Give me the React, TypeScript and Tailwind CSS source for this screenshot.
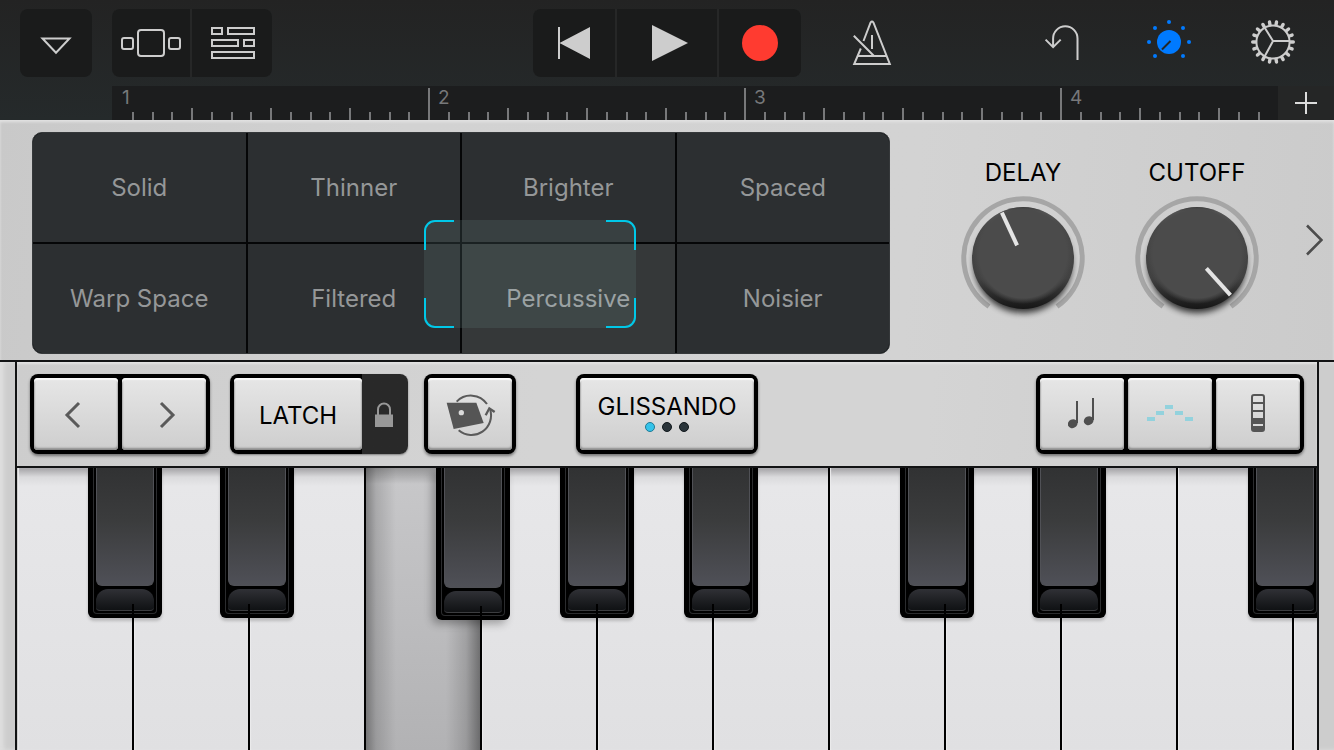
import { ChangeEvent, ReactNode, useState } from 'react';

const presets = [
  'Solid',
  'Thinner',
  'Brighter',
  'Spaced',
  'Warp Space',
  'Filtered',
  'Percussive',
  'Noisier',
];

type Shift = 'left' | 'center' | 'right';

interface PianoKey {
  note: string;
  sharp?: Shift;
}

const keys: PianoKey[] = [
  { note: 'C3', sharp: 'left' },
  { note: 'D3', sharp: 'right' },
  { note: 'E3' },
  { note: 'F3', sharp: 'left' },
  { note: 'G3', sharp: 'center' },
  { note: 'A3', sharp: 'right' },
  { note: 'B3' },
  { note: 'C4', sharp: 'left' },
  { note: 'D4', sharp: 'right' },
  { note: 'E4' },
  { note: 'F4', sharp: 'left' },
  { note: 'G4' },
];

const sharpPosition: Record<Shift, string> = {
  left: '-right-7',
  center: '-right-9',
  right: '-right-11',
};

const seamPosition: Record<Shift, string> = {
  left: 'left-11',
  center: 'left-9',
  right: 'left-7',
};

function Toolbar() {
  return (
    <header className="grid grid-cols-[1fr_auto_1fr] items-center px-5 h-[86px] text-[#cdcdcd]">
      <div className="flex gap-5">
        <button
          aria-label="Menu"
          className="flex items-center justify-center w-[72px] h-[68px] rounded-lg bg-[#1a1b1b]"
        >
          <svg width="32" height="18" viewBox="0 0 32 18" className="mt-1.5">
            <path d="M2.5 1.5h27L16 15.8z" fill="none" stroke="currentColor" strokeWidth="2" />
          </svg>
        </button>
        <div className="flex gap-[2px] rounded-lg overflow-hidden bg-[#262727]">
          <button
            aria-label="Instruments"
            className="flex items-center justify-center w-[78px] h-[68px] bg-[#1a1b1b]"
          >
            <svg
              width="60"
              height="28"
              viewBox="0 0 60 28"
              fill="none"
              stroke="currentColor"
              strokeWidth="2"
            >
              <rect x="1" y="9" width="11" height="11" rx="2" />
              <rect x="17" y="1" width="26" height="26" rx="3" />
              <rect x="48" y="9" width="11" height="11" rx="2" />
            </svg>
          </button>
          <button
            aria-label="Tracks"
            className="flex items-center justify-center w-20 h-[68px] pl-[2px] bg-[#1a1b1b]"
          >
            <svg
              width="44"
              height="32"
              viewBox="0 0 44 32"
              fill="none"
              stroke="currentColor"
              strokeWidth="2"
            >
              <rect x="1" y="1" width="10" height="6" />
              <rect x="17" y="1" width="26" height="6" />
              <rect x="1" y="13" width="26" height="6" />
              <rect x="33" y="13" width="10" height="6" />
              <rect x="1" y="25" width="42" height="6" />
            </svg>
          </button>
        </div>
      </div>

      <div className="flex gap-[2px] rounded-lg overflow-hidden bg-[#262727]">
        <button
          aria-label="Rewind"
          className="flex items-center justify-center w-[82px] h-[68px] bg-[#1a1b1b]"
        >
          <svg width="32" height="32" viewBox="0 0 32 32" fill="currentColor">
            <path d="M0 0h2v32H0zM1.5 16 32 0v32z" />
          </svg>
        </button>
        <button
          aria-label="Play"
          className="flex items-center justify-center w-[100px] h-[68px] bg-[#1a1b1b]"
        >
          <svg width="36" height="36" viewBox="0 0 36 36" fill="currentColor" className="ml-1.5">
            <path d="M0 0l36 18L0 36z" />
          </svg>
        </button>
        <button
          aria-label="Record"
          className="flex items-center justify-center w-[82px] h-[68px] bg-[#1a1b1b]"
        >
          <span className="w-9 h-9 rounded-full bg-[#ff3b30]" />
        </button>
      </div>

      <div className="flex justify-between pl-[35px]">
        <button aria-label="Metronome" className="flex items-center justify-center w-[72px] h-[68px]">
          <svg
            width="40"
            height="46"
            viewBox="852 20 40 46"
            fill="none"
            stroke="currentColor"
            strokeWidth="2"
          >
            <path d="M863.5 41 870.6 22.5Q872 20.5 873.4 22.5L889.8 64H854.2L860.8 48.5" />
            <path d="M858 56h28M872 35v14M853.8 35.8 874 56" />
          </svg>
        </button>
        <div className="flex gap-[26px]">
          <button aria-label="Undo" className="flex items-center justify-center w-20 h-[68px]">
            <svg
              width="36"
              height="38"
              viewBox="1044 25 36 38"
              fill="none"
              stroke="currentColor"
              strokeWidth="2"
            >
              <path d="M1077.5 61V39.5a12.2 12.2 0 0 0-24.4 0V48M1045.6 40.6l7.5 7.6 7.6-7.6" />
            </svg>
          </button>
          <button
            aria-label="Controls"
            className="flex items-center justify-center w-20 h-[68px] text-[#007aff]"
          >
            <svg width="46" height="46" viewBox="-24 -22 46 46" fill="currentColor">
              <circle r="12" />
              <circle cx="0" cy="-20" r="2" />
              <circle cx="-14" cy="-14" r="2" />
              <circle cx="14" cy="-14" r="2" />
              <circle cx="-20" cy="0" r="2" />
              <circle cx="20" cy="0" r="2" />
              <circle cx="-14" cy="14" r="2" />
              <circle cx="14" cy="14" r="2" />
              <path d="M1.5-1-7 7.5" stroke="#222728" strokeWidth="2" />
            </svg>
          </button>
          <button aria-label="Settings" className="flex items-center justify-center w-20 h-[68px]">
            <svg
              width="46"
              height="46"
              viewBox="-22 -22 46 46"
              fill="none"
              stroke="currentColor"
              strokeWidth="2"
            >
              <circle r="16.6" />
              <path d="M0-1H17M0-1-8.4 14.5M0-1-8.4-14.5" />
              {Array.from({ length: 18 }, (_, i) => (
                <path
                  key={i}
                  d="M17.5 0H20.3"
                  strokeWidth="3.4"
                  strokeLinecap="round"
                  transform={`rotate(${i * 20})`}
                />
              ))}
            </svg>
          </button>
        </div>
      </div>
    </header>
  );
}

function tickHeight(bar: number, tick: number) {
  if (tick === 0) return bar === 1 ? 'h-0' : 'h-8';
  return tick % 4 === 0 ? 'h-3' : 'h-2';
}

function Ruler() {
  return (
    <div className="flex h-[34px] pl-28 text-[#77787a]">
      <div className="flex flex-1 min-w-0 pr-1 bg-[#1c1d1e]">
        <div className="flex flex-1 min-w-0 overflow-hidden">
          {[1, 2, 3, 4].map((bar) => (
            <div key={bar} className="relative flex items-end shrink-0 w-[316px]">
              <span className="absolute left-[10px] top-0 text-[19px] leading-6">{bar}</span>
              {Array.from({ length: 16 }, (_, tick) => (
                <span key={tick} className="flex-1">
                  <span className={`block w-[2px] bg-[#77787a] ${tickHeight(bar, tick)}`} />
                </span>
              ))}
            </div>
          ))}
        </div>
      </div>
      <button
        aria-label="Add section"
        className="flex items-center justify-center shrink-0 w-14 bg-[#252626] text-[#dcdcdc]"
      >
        <svg width="22" height="22" viewBox="0 0 22 22" stroke="currentColor" strokeWidth="2">
          <path d="M0 11h22M11 0v22" />
        </svg>
      </button>
    </div>
  );
}

function TransformPad() {
  const [selected, setSelected] = useState('Percussive');

  return (
    <div className="relative flex-1 grid grid-cols-4 grid-rows-2 gap-[2px] h-[222px] rounded-[10px] overflow-hidden border border-[#35383a] bg-[#050607]">
      {presets.map((preset) => (
        <button
          key={preset}
          onClick={() => setSelected(preset)}
          className={`pt-px text-2xl ${
            preset === selected ? 'bg-[#353839] text-[#b0b2b3]' : 'bg-[#2c2f31] text-[#959798]'
          }`}
        >
          {preset}
        </button>
      ))}
      <div className="absolute left-[391px] top-[87px] w-[212px] h-[108px] rounded-[10px] pointer-events-none bg-[#5c7474]/25">
        <svg
          viewBox="0 0 212 108"
          className="w-full h-full"
          fill="none"
          stroke="#00c8e8"
          strokeWidth="2"
        >
          <path d="M1 30V11A10 10 0 0 1 11 1H30M182 1H201A10 10 0 0 1 211 11V30M211 78V97A10 10 0 0 1 201 107H182M30 107H11A10 10 0 0 1 1 97V78" />
        </svg>
      </div>
    </div>
  );
}

interface KnobProps {
  label: string;
  initial: number;
}

// value is the pointer angle in degrees, 0 is straight up
function Knob({ label, initial }: KnobProps) {
  const [angle, setAngle] = useState(initial);
  const id = `knob-${label.toLowerCase()}`;

  function handleChange(e: ChangeEvent<HTMLInputElement>) {
    setAngle(Number(e.target.value));
  }

  return (
    <div className="flex flex-col items-center w-[124px]">
      <label htmlFor={id} className="text-2xl leading-8 text-black">
        {label}
      </label>
      <div className="relative mt-[7px]">
        <svg width="124" height="124" viewBox="-62 -62 124 124" className="block">
          <defs>
            <linearGradient id={`${id}-rim`} x1="0" y1="0" x2="0" y2="1">
              <stop offset="0" stopColor="#2c2c2c" />
              <stop offset="0.05" stopColor="#5c5c5c" />
              <stop offset="0.2" stopColor="#474747" />
              <stop offset="0.7" stopColor="#414141" />
              <stop offset="1" stopColor="#161616" />
            </linearGradient>
            <radialGradient id={`${id}-face`} cx="0.5" cy="0.47">
              <stop offset="0.88" stopColor="#4b4b4b" />
              <stop offset="1" stopColor="#4b4b4b" stopOpacity="0" />
            </radialGradient>
            <filter id={`${id}-blur`} x="-20%" y="-20%" width="140%" height="140%">
              <feGaussianBlur stdDeviation="3" />
            </filter>
          </defs>
          <path
            d="M-34 48.5A59.2 59.2 0 1 1 34 48.5"
            fill="none"
            stroke="#a6a6a6"
            strokeWidth="5"
          />
          <circle cy="6" r="49" fill="#000" opacity="0.75" filter={`url(#${id}-blur)`} />
          <circle r="51" fill={`url(#${id}-rim)`} />
          <circle r="50" cy="-1" fill={`url(#${id}-face)`} />
          <path
            d="M0-50V-14"
            stroke="#e4e4e4"
            strokeWidth="4"
            transform={`rotate(${angle})`}
          />
        </svg>
        <input
          id={id}
          type="range"
          min={-145}
          max={145}
          value={angle}
          onChange={handleChange}
          className="absolute inset-0 w-full h-full opacity-0"
        />
      </div>
    </div>
  );
}

function SoundPanel() {
  return (
    <section className="flex items-start pl-8 pt-3 h-[242px] border-b-2 border-[#121314] bg-[linear-gradient(95deg,#c9c9c9,#d2d2d2_30%,#d3d3d3_68%,#cbcbcb)] shadow-[inset_0_2px_3px_#e2e2e2]">
      <TransformPad />
      <div className="flex gap-[50px] pl-[71px] pt-[25px]">
        <Knob label="DELAY" initial={-25} />
        <Knob label="CUTOFF" initial={138} />
      </div>
      <button
        aria-label="Next controls"
        className="flex items-center justify-center w-10 h-12 ml-[35px] mt-[84px]"
      >
        <svg width="18" height="32" viewBox="0 0 18 32" fill="none" stroke="#4c4c4c" strokeWidth="2.6">
          <path d="M2 1.5 16.5 16 2 30.5" />
        </svg>
      </button>
    </section>
  );
}

function ButtonFrame({ children }: { children: ReactNode }) {
  return (
    <div className="flex gap-1 h-20 p-1 rounded-lg bg-black shadow-[0_2px_3px_rgba(0,0,0,0.45)]">
      {children}
    </div>
  );
}

interface FaceButtonProps {
  label?: string;
  className: string;
  children: ReactNode;
}

function FaceButton({ label, className, children }: FaceButtonProps) {
  return (
    <button
      aria-label={label}
      className={`flex flex-col items-center justify-center rounded bg-linear-to-b from-[#e6e6e6] to-[#cecece] text-2xl leading-7 text-black shadow-[inset_0_2px_1px_#fafafa,inset_0_-2px_2px_#8c8c8c,inset_1px_0_1px_#b4b4b4,inset_-1px_0_1px_#b4b4b4] ${className}`}
    >
      {children}
    </button>
  );
}

function ControlStrip() {
  return (
    <div className="flex items-center px-[13px] h-[106px] border-b-2 border-[#121314] bg-[linear-gradient(95deg,#cdcdcd,#d4d4d4_40%,#d4d4d4_70%,#cbcbcb)] shadow-[inset_0_2px_2px_#e2e2e2]">
      <ButtonFrame>
        <FaceButton label="Octave down" className="w-[84px] pt-[2px]">
          <svg width="24" height="28" viewBox="0 0 24 28" fill="none" stroke="#5a5a5a" strokeWidth="3">
            <path d="M15 2 3 14l12 12" />
          </svg>
        </FaceButton>
        <FaceButton label="Octave up" className="w-[84px] pt-[2px]">
          <svg width="24" height="28" viewBox="0 0 24 28" fill="none" stroke="#5a5a5a" strokeWidth="3">
            <path d="M9 2l12 12L9 26" />
          </svg>
        </FaceButton>
      </ButtonFrame>

      <div className="flex ml-5 h-20 p-1 pr-0 rounded-lg bg-linear-to-r from-black from-74% to-[#292929] to-74% shadow-[0_1px_2px_rgba(0,0,0,0.4)]">
        <FaceButton className="w-32 pt-[3px]">LATCH</FaceButton>
        <button aria-label="Lock latch" className="flex items-center justify-center w-[46px] pt-[2px] pr-[2px]">
          <svg width="18" height="26" viewBox="0 0 18 26" fill="none">
            <path d="M0 12.5h18V25H0z" fill="#989898" />
            <path d="M3 13V7.5a6 6 0 0 1 12 0V13" stroke="#989898" strokeWidth="2" />
          </svg>
        </button>
      </div>

      <div className="ml-4">
        <ButtonFrame>
          <FaceButton label="Rotate layout" className="w-[84px] pl-[2px] pt-[2px]">
            <svg width="50" height="42" viewBox="138 117 150 126" fill="none" stroke="#5a5a5a">
              <path d="M140 143H229L251 204 161 222z" fill="#555" stroke="none" />
              <circle cx="184" cy="173" r="8" fill="#dadada" stroke="none" />
              <path d="M170 140A59 59 0 0 1 261 147M176 226A59 59 0 0 0 270 162" strokeWidth="6" />
              <path d="M257 181 268 160 284 171" strokeWidth="7" />
            </svg>
          </FaceButton>
        </ButtonFrame>
      </div>

      <div className="ml-[60px]">
        <ButtonFrame>
          <FaceButton className="w-[174px] pb-[3px]">
            GLISSANDO
            <span className="flex gap-[7px] mt-px">
              <span className="w-[10px] h-[10px] rounded-full border border-[#217a94] bg-[#35c3ea]" />
              <span className="w-[10px] h-[10px] rounded-full border border-[#11181c] bg-[#2a343a]" />
              <span className="w-[10px] h-[10px] rounded-full border border-[#11181c] bg-[#2a343a]" />
            </span>
          </FaceButton>
        </ButtonFrame>
      </div>

      <div className="ml-auto">
        <ButtonFrame>
          <FaceButton label="Notes" className="w-[84px] pb-[2px]">
            <svg width="28" height="32" viewBox="537 126 84 96" fill="#4f4f4f">
              <ellipse cx="551" cy="206" rx="15" ry="13" transform="rotate(-25 551 206)" />
              <ellipse cx="599" cy="197" rx="15" ry="13" transform="rotate(-25 599 197)" />
              <path d="M561 138h6v66h-6zM609 129h6v66h-6z" />
            </svg>
          </FaceButton>
          <FaceButton label="Arpeggiator" className="w-[84px] pb-[2px]">
            <svg width="46" height="16" viewBox="0 0 46 16" fill="#93d2dd">
              <path d="M0 12h8v4H0zM9 6h8v4H9zM18 0h8v4h-8zM28 6h8v4h-8zM38 12h8v4h-8z" />
            </svg>
          </FaceButton>
          <FaceButton label="Chord strips" className="w-[84px] pb-[2px]">
            <svg width="14" height="38" viewBox="0 0 14 38" fill="none" stroke="#555" strokeWidth="2">
              <rect x="1" y="1" width="12" height="36" rx="2" />
              <path d="M1 9h12M1 17h12" />
              <path d="M1 24h12v12H1z" fill="#555" stroke="none" />
              <path d="M2 31h10" stroke="#dadada" />
            </svg>
          </FaceButton>
        </ButtonFrame>
      </div>
    </div>
  );
}

interface SharpKeyProps {
  note: string;
  shift: Shift;
  lowered: boolean;
}

function SharpKey({ note, shift, lowered }: SharpKeyProps) {
  return (
    <button
      aria-label={`${note} sharp`}
      className={`absolute top-0 z-10 w-[74px] px-[5px] pb-1 rounded-b-md bg-black ${
        sharpPosition[shift]
      } ${
        lowered
          ? 'h-[152px] shadow-[-4px_4px_8px_rgba(0,0,0,0.3)]'
          : 'h-[150px] shadow-[0_3px_3px_rgba(0,0,0,0.18)]'
      }`}
    >
      <span className="flex flex-col h-full px-[2px] pb-[2px] rounded-b border border-t-0 border-[#2b2c2e]">
        <span className="flex-1 rounded-b-md border-x border-b border-[#505156] bg-linear-to-b from-[#313233] via-[#3b3c3d] via-45% to-[#4f5057]" />
        <span className="h-[22px] mt-[3px] rounded-t-xl rounded-b-sm border-b border-[#3c3d40] bg-linear-to-b from-[#303136] to-[#101214]" />
      </span>
      <span className={`absolute bottom-0 w-[2px] h-[14px] bg-black ${seamPosition[shift]}`} />
    </button>
  );
}

function Keyboard() {
  const [pressed, setPressed] = useState('F3');

  return (
    <div className="flex flex-1 pl-px min-h-[282px] overflow-hidden">
      {keys.map(({ note, sharp }) => (
        <div key={note} className="relative flex flex-1 min-w-[116px]">
          <button
            aria-label={note}
            onClick={() => setPressed(note)}
            className={`flex-1 border-r-2 border-black ${
              note === pressed
                ? 'bg-[linear-gradient(rgba(0,0,0,0.25),transparent_16px),linear-gradient(90deg,rgba(0,0,0,0.35),rgba(0,0,0,0.14)_10px,transparent_30px,transparent_80px,rgba(0,0,0,0.14)_100px,rgba(0,0,0,0.4)),linear-gradient(#c8c8ca,#b2b2b4)]'
                : 'bg-[linear-gradient(#a3a2a5,#dadadc_9px,#e7e7e9_18px,#e0e0e2)] shadow-[inset_1px_0_1px_#ececed]'
            }`}
          />
          {sharp && <SharpKey note={note} shift={sharp} lowered={note === pressed} />}
        </div>
      ))}
    </div>
  );
}

function App() {
  return (
    <div className="flex flex-col min-h-screen bg-[#cdcdcd] font-[Inter,'Liberation_Sans',sans-serif]">
      <div className="bg-linear-to-b from-[#232323] to-[#252a2b]">
        <Toolbar />
        <Ruler />
      </div>
      <SoundPanel />
      <main className="flex flex-1 flex-col px-[15px] shadow-[inset_4px_0_4px_#dedede]">
        <div className="flex flex-1 flex-col border-x-2 border-[#121314]">
          <ControlStrip />
          <Keyboard />
        </div>
      </main>
    </div>
  );
}

export default App;
